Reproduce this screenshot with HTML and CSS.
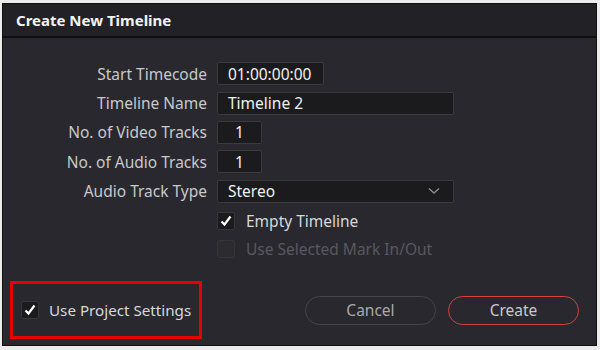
FILE: index.html
```html
<!DOCTYPE html>
<html lang="en">
<head>
    <meta charset="UTF-8">
    <title>Create New Timeline</title>
    <link rel="stylesheet" href="styles.css">
</head>
<body>
    <div class="dialog">
        <div class="title-bar">Create New Timeline</div>
        <div class="body">
            <div class="form">
                <div class="label">Start Timecode</div>
                <div class="field"><div class="input tc">01:00:00:00</div></div>
                <div class="label">Timeline Name</div>
                <div class="field"><div class="input wide">Timeline 2</div></div>
                <div class="label">No. of Video Tracks</div>
                <div class="field"><div class="input num">1</div></div>
                <div class="label">No. of Audio Tracks</div>
                <div class="field"><div class="input num">1</div></div>
                <div class="label">Audio Track Type</div>
                <div class="field">
                    <div class="input wide select">
                        <span>Stereo</span>
                        <svg width="12" height="8" viewBox="0 0 12 8"><path d="M1 1.5 L6 6 L11 1.5" fill="none" stroke="#8a8a90" stroke-width="1.5"/></svg>
                    </div>
                </div>
                <div></div>
                <div class="field check-row">
                    <span class="checkbox on"><svg width="14" height="14" viewBox="0 0 14 14"><path d="M2.5 7.5 L5.5 10.5 L11.5 2.5" fill="none" stroke="#fff" stroke-width="2.2"/></svg></span>
                    <span class="check-label">Empty Timeline</span>
                </div>
                <div></div>
                <div class="field check-row disabled">
                    <span class="checkbox"></span>
                    <span class="check-label">Use Selected Mark In/Out</span>
                </div>
            </div>
            <div class="footer">
                <div class="project-settings">
                    <span class="checkbox on"><svg width="14" height="14" viewBox="0 0 14 14"><path d="M2.5 7.5 L5.5 10.5 L11.5 2.5" fill="none" stroke="#fff" stroke-width="2.2"/></svg></span>
                    <span class="check-label small">Use Project Settings</span>
                </div>
                <div class="buttons">
                    <button class="btn">Cancel</button>
                    <button class="btn primary">Create</button>
                </div>
            </div>
        </div>
    </div>
</body>
</html>
```

FILE: styles.css
```css
* {
    margin: 0;
    padding: 0;
    box-sizing: border-box;
    font-family: 'Noto Sans', 'Open Sans', sans-serif;
}

body {
    background-color: #ececec;
    width: 600px;
    height: 350px;
    padding: 3px 3px 4px 2px;
}

.dialog {
    width: 595px;
    height: 343px;
    background-color: #28282e;
    border: 1px solid #111;
    display: flex;
    flex-direction: column;
}

.title-bar {
    height: 34px;
    background-color: #222226;
    border-bottom: 2px solid #0e0e10;
    color: #f2f2f2;
    font-weight: bold;
    font-size: 15px;
    padding: 6px 0 0 13px;
}

.body {
    flex: 1;
    display: flex;
    flex-direction: column;
    justify-content: space-between;
}

.form {
    display: grid;
    grid-template-columns: 204px 1fr;
    grid-template-rows: repeat(6, 29.4px) 27px;
    column-gap: 10px;
    padding-top: 21px;
}

.label {
    color: #c9c9cc;
    font-size: 15.5px;
    text-align: right;
    display: flex;
    align-items: center;
    justify-content: flex-end;
}

.field {
    display: flex;
    align-items: center;
}

.input {
    height: 23px;
    background-color: #1b1b1e;
    border: 1px solid #3a3a3f;
    border-radius: 2px;
    color: #f0f0f0;
    font-size: 15.5px;
    display: flex;
    align-items: center;
    padding-left: 10px;
}

.tc {
    width: 107px;
}

.wide {
    width: 237px;
}

.num {
    width: 45px;
    justify-content: center;
    padding-left: 0;
}

.select {
    justify-content: space-between;
    padding-right: 13px;
}

.check-row {
    gap: 11px;
}

.checkbox {
    width: 18px;
    height: 18px;
    background-color: #1b1b1e;
    border: 1px solid #36363b;
    border-radius: 2px;
    display: flex;
    align-items: center;
    justify-content: center;
}

.check-label {
    color: #d8d8db;
    font-size: 15.5px;
}

.check-label.small {
    font-size: 15.2px;
}

.disabled .checkbox {
    background-color: #2b2b30;
    border-color: #343439;
}

.disabled .check-label {
    color: #58585e;
}

.footer {
    display: flex;
    align-items: center;
    justify-content: space-between;
    padding: 0 17px 6px 7px;
}

.project-settings {
    width: 192px;
    height: 58px;
    border: 3px solid #e60000;
    display: flex;
    align-items: center;
    gap: 10px;
    padding-left: 8px;
}

.buttons {
    display: flex;
    gap: 12px;
}

.btn {
    width: 131px;
    height: 29px;
    border-radius: 15px;
    background-color: #28282e;
    border: 1px solid #45454b;
    color: #a8a8ad;
    font-size: 15.5px;
}

.btn.primary {
    border: 1.5px solid #d8403d;
    color: #c8c8cc;
}
```
